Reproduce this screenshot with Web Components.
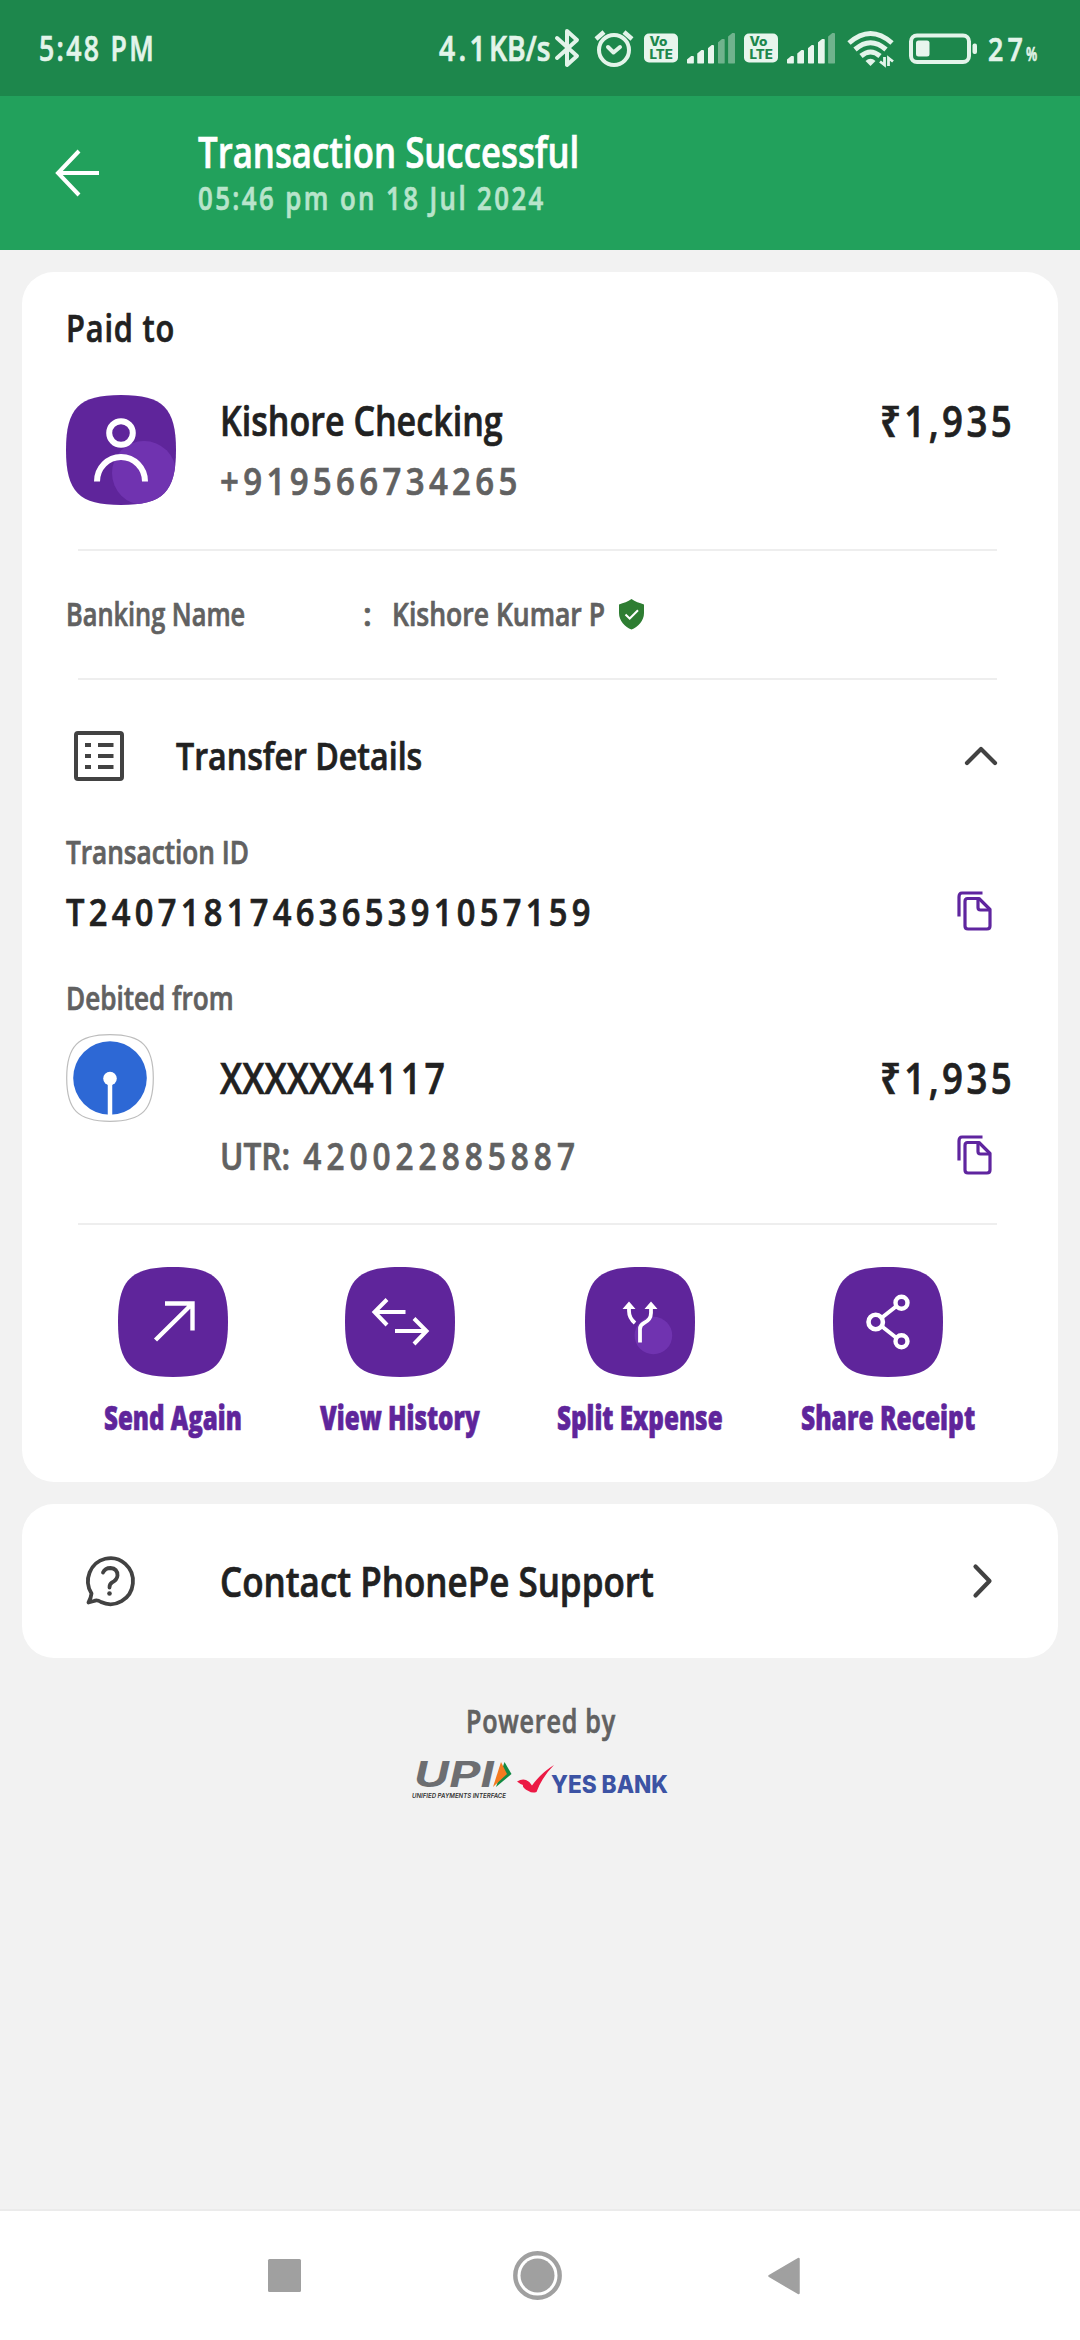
<!DOCTYPE html>
<html lang="en">
<head>
<meta charset="utf-8">
<title>Transaction Successful</title>
<style>
    body {
        margin: 0;
        background: #f2f2f2;
        font-family: "Open Sans", "Noto Sans", sans-serif;
    }
</style>
</head>
<body>
<receipt-page></receipt-page>

<script>
// single line of text, condensed to a given width
class FitText extends HTMLElement {
    constructor() {
        super();
        const shadow = this.attachShadow({ mode: 'open' });
        shadow.innerHTML = `
            <style>
                :host {
                    display: block;
                    flex: none;
                    font-weight: 600;
                    color: #212121;
                }
                .text {
                    display: inline-block;
                    white-space: nowrap;
                    transform-origin: 0 50%;
                    -webkit-text-stroke: 0.7px currentColor;
                }
                ::slotted(span) { letter-spacing: 0; }
            </style>
            <span class="text"><slot></slot></span>
        `;
    }

    connectedCallback() {
        const size = Number(this.getAttribute('size'));
        const width = Number(this.getAttribute('width'));
        const gap = Number(this.getAttribute('gap') || 0);
        const text = this.shadowRoot.querySelector('.text');
        this.style.fontSize = size + 'px';
        this.style.lineHeight = size + 'px';
        this.style.height = size + 'px';
        this.style.width = width + 'px';
        if (this.hasAttribute('weight')) this.style.fontWeight = this.getAttribute('weight');
        if (this.hasAttribute('color')) this.style.color = this.getAttribute('color');
        text.style.letterSpacing = gap + 'px';
        const natural = text.offsetWidth - gap;
        text.style.transform = `scaleX(${width / natural})`;
    }
}
customElements.define('fit-text', FitText);

const ICONS = {
    back: [44, 48, `<path d="M24 2 3 24 24 46M3 24H44" fill="none" stroke="#fff" stroke-width="4"/>`],
    bluetooth: [25, 40, `<path d="M2 10 22 28 12 37V3L22 12 2 30" fill="none" stroke="#e3f4ea" stroke-width="4" stroke-linejoin="round" stroke-linecap="round"/>`],
    alarm: [40, 38, `<g fill="none" stroke="#e3f4ea" stroke-width="4"><circle cx="20" cy="21" r="15"/><path d="M2 10 10 3M30 3 38 10" stroke-width="4.5"/><path d="M14 18 19.500 23.500 26 18" stroke-linecap="round" stroke-linejoin="round"/></g>`],
    volte: [34, 30, `<rect width="34" height="29" y=".5" rx="5" fill="#e8f5ed"/><g fill="#1d874c" font-family="Inter" font-weight="800" font-size="12.500"><text x="5.500" y="13" textLength="18" lengthAdjust="spacingAndGlyphs">Vo</text><text x="5.500" y="26" textLength="23.500" lengthAdjust="spacingAndGlyphs">LTE</text></g>`],
    wifi: [47, 36, `<g fill="none" stroke="#e3f4ea" stroke-width="5"><path d="M2 13Q23.500-6 45 13"/><path d="M8 19.500Q23.500 6 39 19.500"/><path d="M14 26Q23.500 18 33 26"/></g><path d="M18.500 31Q23.500 26.500 28.500 31L23.500 36Z" fill="#e3f4ea"/><path d="M37.500 27V35L33 31.500M41.500 36V28L46 31.500" fill="none" stroke="#e3f4ea" stroke-width="2.800"/>`],
    battery: [69, 31, `<rect x="2" y="2.500" width="58" height="26.500" rx="6" fill="none" stroke="#e3f4ea" stroke-width="4"/><rect x="7" y="7.500" width="13.500" height="16" rx="2.500" fill="#e8f5ed"/><rect x="63.500" y="10.500" width="4.500" height="10.500" rx="2" fill="#e3f4ea"/>`],
    shield: [25, 30, `<path d="M12.500 0C16 2.500 20.500 4 25 5.500V14C25 22 19 28 12.500 30.500 6 28 0 22 0 14V5.500C4.500 4 9 2.500 12.500 0Z" fill="#2e7d32"/><path d="M6.500 15.500 10.700 19.500 19 11.200" fill="none" stroke="#fff" stroke-width="2"/>`],
    list: [50, 50, `<g fill="none" stroke="#424242" stroke-width="4"><rect x="2" y="2" width="46" height="46" rx="2"/><path d="M11 14H17M24 14H39.500M11 25H17M24 25H39.500M11 36H17M24 36H39.500"/></g>`],
    up: [32, 19, `<path d="M2 17 16 3 30 17" fill="none" stroke="#424242" stroke-width="4.200" stroke-linecap="round" stroke-linejoin="round"/>`],
    right: [19, 34, `<path d="M2.500 2.500 16.500 17 2.500 31.500" fill="none" stroke="#424242" stroke-width="4.200" stroke-linecap="round" stroke-linejoin="round"/>`],
    copy: [35, 40, `<g fill="none" stroke="#5f259f" stroke-width="3.200" stroke-linejoin="round"><path d="M2 25.500V6Q2 2 5 2H25.500"/><path d="M10.500 7.500H22L33 18.500V35Q33 38 30 38H11Q8 38 8 35V10.500Q8 7.500 10.500 7.500Z"/><path d="M21 8V16.500Q21 19 23.500 19H33"/></g>`],
    bank: [88, 88, `<path d="M44 .7C76 .7 87.300 12 87.300 44S76 87.300 44 87.300 .7 76 .7 44 12 .7 44 .7Z" fill="#fff" stroke="#bdbdbd" stroke-width="1.200"/><circle cx="44" cy="44" r="36.800" fill="#2d68d5"/><circle cx="44" cy="44.500" r="6.800" fill="#fff"/><path d="M44 45V82" stroke="#fff" stroke-width="4.500"/>`],
    help: [50, 50, `<g fill="none" stroke="#424242" stroke-width="3.800" stroke-linecap="round" stroke-linejoin="round"><path d="M6.500 37.500A22.500 23 0 1 1 16 46Q12 43.500 9 45L3.500 46.500Q6 42 6.500 37.500Z"/><path d="M18 16.500Q20 12 25.500 12 32.500 12.500 32.500 19.500 32 24 27 26.500 24.500 28 24.500 31.500"/></g><circle cx="24.500" cy="37.500" r="2.300" fill="#424242"/>`],
    square: [33, 33, `<rect width="33" height="33" rx="1.500" fill="#a0a0a0"/>`],
    home: [49, 49, `<circle cx="24.500" cy="24.500" r="22.200" fill="none" stroke="#a0a0a0" stroke-width="4.400"/><circle cx="24.500" cy="24.500" r="17" fill="#a0a0a0"/>`],
    triangle: [32, 38, `<path d="M1.500 19 30.500 2V36Z" fill="#a0a0a0" stroke="#a0a0a0" stroke-width="2.500" stroke-linejoin="round"/>`],
    upi: [101, 38, `<g font-family="Inter" font-style="italic"><text x="2" y="26" font-size="35" font-weight="700" fill="#6d6e71" textLength="80" lengthAdjust="spacingAndGlyphs">UPI</text><text x="0" y="36.500" font-size="6.500" font-weight="600" fill="#333" textLength="94" lengthAdjust="spacingAndGlyphs">UNIFIED PAYMENTS INTERFACE</text></g><path d="M92.500 1 99.500 13 84 26Z" fill="#128a43"/><path d="M89 1 95 13 81 26Z" fill="#f37a20"/>`],
    yes: [152, 32, `<path d="M0 17.500Q5 14.500 9 16 13 17.500 15 21.500 24 9 37 1 25 13 19.500 28 15 29.500 11.500 27 5 24 6 21 3 20 0 17.500Z" fill="#ec1944"/><text x="34" y="28.500" font-family="Inter" font-weight="800" font-size="24" fill="#3c53a4" textLength="117" lengthAdjust="spacingAndGlyphs">YES BANK</text>`]
};

class GlyphIcon extends HTMLElement {
    constructor() {
        super();
        this.attachShadow({ mode: 'open' });
    }

    connectedCallback() {
        const [w, h, body] = ICONS[this.getAttribute('name')];
        this.shadowRoot.innerHTML = `
            <style>
                :host { display: block; flex: none; }
                svg { display: block; overflow: visible; }
            </style>
            <svg width="${w}" height="${h}" viewBox="0 0 ${w} ${h}">${body}</svg>
        `;
    }
}
customElements.define('glyph-icon', GlyphIcon);

const TILE = 'M55 0C97 0 110 13 110 55S97 110 55 110 0 97 0 55 13 0 55 0Z';

const TILE_ICONS = {
    person: `<circle cx="78" cy="78" r="32" fill="#7033b0"/><circle cx="55" cy="38" r="11.800"/><path d="M31 86.500A24 24.500 0 0 1 79 86.500" stroke-width="6"/>`,
    send: `<path d="M37.500 73 74 37M47 36.500H74.500V63.500" stroke-width="4.400"/>`,
    history: `<path d="M60.500 45H29.500M42 32.500 29.500 45 42 58M50 64H81.500M69 51.500 81.500 64 69 77" stroke-width="4"/>`,
    split: `<circle cx="68.400" cy="68.500" r="18.800" fill="#7033b0"/><path d="M55 75.500V62Q55 58 59 56 66 52.500 66 46V39M50 56Q44 51 44 44V39" stroke-width="3.800"/><path d="M37.500 42 44 34.500 50.500 42ZM59.500 42 66 34.500 72.500 42Z" fill="#fff" stroke="none"/>`,
    share: `<path d="M49 50.500 63 39.500M49 59.500 63 70.500" stroke-width="4"/><circle cx="42.700" cy="55" r="7.200" stroke-width="4.600"/><circle cx="68.500" cy="35.700" r="6" stroke-width="4.400"/><circle cx="68.500" cy="74.300" r="6" stroke-width="4.400"/>`
};

class IconTile extends HTMLElement {
    constructor() {
        super();
        this.attachShadow({ mode: 'open' });
    }

    connectedCallback() {
        this.shadowRoot.innerHTML = `
            <style>
                :host { display: block; flex: none; width: 110px; height: 110px; }
                svg { display: block; }
                .art { fill: none; stroke: #fff; stroke-width: 6; clip-path: url(#edge); }
                .art [fill="#7033b0"] { stroke: none; }
            </style>
            <svg width="110" height="110" viewBox="0 0 110 110">
                <clipPath id="edge"><path d="${TILE}"/></clipPath>
                <path d="${TILE}" fill="#5f259b"/>
                <g class="art">${TILE_ICONS[this.getAttribute('name')]}</g>
            </svg>
        `;
    }
}
customElements.define('icon-tile', IconTile);

class SignalBars extends HTMLElement {
    constructor() {
        super();
        this.attachShadow({ mode: 'open' });
    }

    connectedCallback() {
        const level = Number(this.getAttribute('level'));
        const bars = [8, 14, 19, 25, 31].map((h, i) => `<i class="${i < level ? 'on' : ''}" style="height:${h}px"></i>`);
        this.shadowRoot.innerHTML = `
            <style>
                :host { display: flex; flex: none; align-items: flex-end; gap: 3.400px; height: 31px; }
                i {
                    width: 6.900px;
                    background: #70b38d;
                    border-radius: 1px;
                    clip-path: polygon(0 4px, 70% 0, 100% 0, 100% 100%, 0 100%);
                }
                .on { background: #e8f5ed; }
            </style>
            ${bars.join('')}
        `;
    }
}
customElements.define('signal-bars', SignalBars);

class StatusBar extends HTMLElement {
    constructor() {
        super();
        this.attachShadow({ mode: 'open' }).innerHTML = `
            <style>
                :host {
                    display: flex;
                    align-items: center;
                    box-sizing: border-box;
                    height: 96px;
                    padding: 0 43px 0 39px;
                    background: #1d874c;
                }
                .clock { flex: 1; }
                .percent { padding-top: 12px; margin-left: 3px; }
            </style>
            <div class="clock"><fit-text size="34" width="115" gap="3" color="#e3f4ea">5:48 PM</fit-text></div>
            <fit-text size="34" width="108" gap="4" color="#e3f4ea">4.1<span>KB/s</span></fit-text>
            <glyph-icon name="bluetooth" style="margin-left:8px"></glyph-icon>
            <glyph-icon name="alarm" style="margin-left:14px"></glyph-icon>
            <glyph-icon name="volte" style="margin-left:10px"></glyph-icon>
            <signal-bars level="3" style="margin-left:9px"></signal-bars>
            <glyph-icon name="volte" style="margin-left:9px"></glyph-icon>
            <signal-bars level="4" style="margin-left:9px"></signal-bars>
            <glyph-icon name="wifi" style="margin-left:12px"></glyph-icon>
            <glyph-icon name="battery" style="margin-left:15px"></glyph-icon>
            <fit-text size="33" width="35" gap="5" color="#e3f4ea" style="margin-left:10px">27</fit-text>
            <div class="percent"><fit-text size="20" width="11" color="#e3f4ea">%</fit-text></div>
        `;
    }
}
customElements.define('status-bar', StatusBar);

class AppHeader extends HTMLElement {
    constructor() {
        super();
        this.attachShadow({ mode: 'open' }).innerHTML = `
            <style>
                :host {
                    display: flex;
                    align-items: center;
                    gap: 99px;
                    height: 154px;
                    padding-left: 55px;
                    background: #22a15c;
                }
                .titles { display: grid; gap: 9px; padding-bottom: 3px; }
            </style>
            <glyph-icon name="back"></glyph-icon>
            <div class="titles">
                <slot name="title"></slot>
                <slot name="subtitle"></slot>
            </div>
        `;
    }
}
customElements.define('app-header', AppHeader);

class SurfaceCard extends HTMLElement {
    constructor() {
        super();
        this.attachShadow({ mode: 'open' }).innerHTML = `
            <style>
                :host {
                    display: block;
                    box-sizing: border-box;
                    margin: 22px 22px 0;
                    background: #fff;
                    border-radius: 32px;
                }
            </style>
            <slot></slot>
        `;
    }
}
customElements.define('surface-card', SurfaceCard);

class ActionButton extends HTMLElement {
    constructor() {
        super();
        this.attachShadow({ mode: 'open' });
    }

    connectedCallback() {
        this.shadowRoot.innerHTML = `
            <style>
                :host { display: flex; flex-direction: column; align-items: center; gap: 24px; }
            </style>
            <icon-tile name="${this.getAttribute('icon')}"></icon-tile>
            <slot></slot>
        `;
    }
}
customElements.define('action-button', ActionButton);

class NavBar extends HTMLElement {
    constructor() {
        super();
        this.attachShadow({ mode: 'open' }).innerHTML = `
            <style>
                :host {
                    display: flex;
                    align-items: center;
                    box-sizing: border-box;
                    height: 131px;
                    padding-left: 268px;
                    border-top: 2px solid #ebebeb;
                    background: #fff;
                }
            </style>
            <glyph-icon name="square"></glyph-icon>
            <glyph-icon name="home" style="margin-left:212px"></glyph-icon>
            <glyph-icon name="triangle" style="margin-left:206px"></glyph-icon>
        `;
    }
}
customElements.define('nav-bar', NavBar);

class ReceiptPage extends HTMLElement {
    constructor() {
        super();
        this.attachShadow({ mode: 'open' }).innerHTML = `
            <style>
                :host { display: flex; flex-direction: column; height: 2340px; }
                main { flex: 1; }
                .receipt { height: 1210px; }
                .row { display: flex; align-items: center; box-sizing: border-box; padding: 0 46px 0 44px; }
                .line { height: 60px; display: flex; align-items: center; }
                .grow { flex: 1; }
                hr { border: 0; height: 2px; margin: 0 61px 0 56px; background: #eee; }
                .paid { height: 110px; margin-bottom: 1px; }
                .payee { height: 166px; align-items: flex-start; padding-top: 7px; }
                .payee icon-tile { margin: 5px 44px 0 0; }
                .banking { height: 127px; padding-bottom: 2px; }
                .transfer { height: 151px; padding: 0 61px 0 52px; }
                .label { height: 41px; }
                .value { height: 78px; padding-right: 66px; padding-bottom: 1px; }
                .from { margin-top: 28px; height: 40px; }
                .account { align-items: flex-start; padding-top: 16px; margin-bottom: 34px; }
                .account > .grow { margin-left: 66px; }
                .top { height: 87px; }
                .utr { height: 68px; padding-right: 20px; }
                .actions { display: flex; gap: 77.500px; padding: 42px 0 0 82px; }
                .support { height: 154px; }
                .support .row { height: 100%; padding: 0 66px 0 63px; }
                footer { display: flex; flex-direction: column; align-items: center; gap: 24px; padding-top: 47px; }
                .logos { display: flex; align-items: center; gap: 4px; padding-left: 1px; }
            </style>
            <status-bar></status-bar>
            <app-header>
                <fit-text slot="title" size="43" width="381" color="#fff">Transaction Successful</fit-text>
                <fit-text slot="subtitle" size="32" width="345" gap="3" color="#b8e4cb">05:46 pm on 18 Jul 2024</fit-text>
            </app-header>
            <main>
                <surface-card class="receipt">
                    <div class="row paid"><fit-text size="37" width="108" gap="1">Paid to</fit-text></div>
                    <div class="row payee">
                        <icon-tile name="person"></icon-tile>
                        <div class="grow">
                            <div class="line"><fit-text size="42" width="283">Kishore Checking</fit-text></div>
                            <div class="line"><fit-text size="38" width="297" gap="5" color="#616161">+919566734265</fit-text></div>
                        </div>
                        <div class="line"><fit-text size="43" width="132" gap="4">₹1,935</fit-text></div>
                    </div>
                    <hr>
                    <div class="row banking">
                        <fit-text size="32" width="179" color="#616161">Banking Name</fit-text>
                        <fit-text size="32" width="9" color="#616161" style="margin-left:118px">:</fit-text>
                        <fit-text size="32" width="213" color="#616161" style="margin-left:20px">Kishore Kumar P</fit-text>
                        <glyph-icon name="shield" style="margin-left:14px"></glyph-icon>
                    </div>
                    <hr>
                    <div class="row transfer">
                        <glyph-icon name="list"></glyph-icon>
                        <div class="grow"><fit-text size="37" width="246" style="margin-left:52px">Transfer Details</fit-text></div>
                        <glyph-icon name="up"></glyph-icon>
                    </div>
                    <div class="row label"><fit-text size="32" width="183" color="#616161">Transaction ID</fit-text></div>
                    <div class="row value">
                        <div class="grow"><fit-text size="38" width="524" gap="5">T2407181746365391057159</fit-text></div>
                        <glyph-icon name="copy"></glyph-icon>
                    </div>
                    <div class="row from"><fit-text size="32" width="168" color="#616161">Debited from</fit-text></div>
                    <div class="row account">
                        <glyph-icon name="bank"></glyph-icon>
                        <div class="grow">
                            <div class="line top">
                                <div class="grow"><fit-text size="43" width="225" gap="4"><span>XXXXXX</span>4117</fit-text></div>
                                <fit-text size="43" width="132" gap="4">₹1,935</fit-text>
                            </div>
                            <div class="line utr">
                                <div class="grow"><fit-text size="38" width="355" gap="6" color="#616161"><span>UTR:</span> 420022885887</fit-text></div>
                                <glyph-icon name="copy"></glyph-icon>
                            </div>
                        </div>
                    </div>
                    <hr>
                    <div class="actions">
                        <action-button icon="send"><fit-text size="33" width="138" weight="800" color="#5f259b">Send Again</fit-text></action-button>
                        <action-button icon="history"><fit-text size="33" width="160" weight="800" color="#5f259b">View History</fit-text></action-button>
                        <action-button icon="split"><fit-text size="33" width="166" weight="800" color="#5f259b">Split Expense</fit-text></action-button>
                        <action-button icon="share"><fit-text size="33" width="174" weight="800" color="#5f259b">Share Receipt</fit-text></action-button>
                    </div>
                </surface-card>
                <surface-card class="support">
                    <div class="row">
                        <glyph-icon name="help"></glyph-icon>
                        <div class="grow"><fit-text size="42" width="434" style="margin-left:85px">Contact PhonePe Support</fit-text></div>
                        <glyph-icon name="right"></glyph-icon>
                    </div>
                </surface-card>
                <footer>
                    <fit-text size="32" width="149" gap="1" color="#616161">Powered by</fit-text>
                    <div class="logos">
                        <glyph-icon name="upi"></glyph-icon>
                        <glyph-icon name="yes"></glyph-icon>
                    </div>
                </footer>
            </main>
            <nav-bar></nav-bar>
        `;
    }
}
customElements.define('receipt-page', ReceiptPage);
</script>
</body>
</html>
